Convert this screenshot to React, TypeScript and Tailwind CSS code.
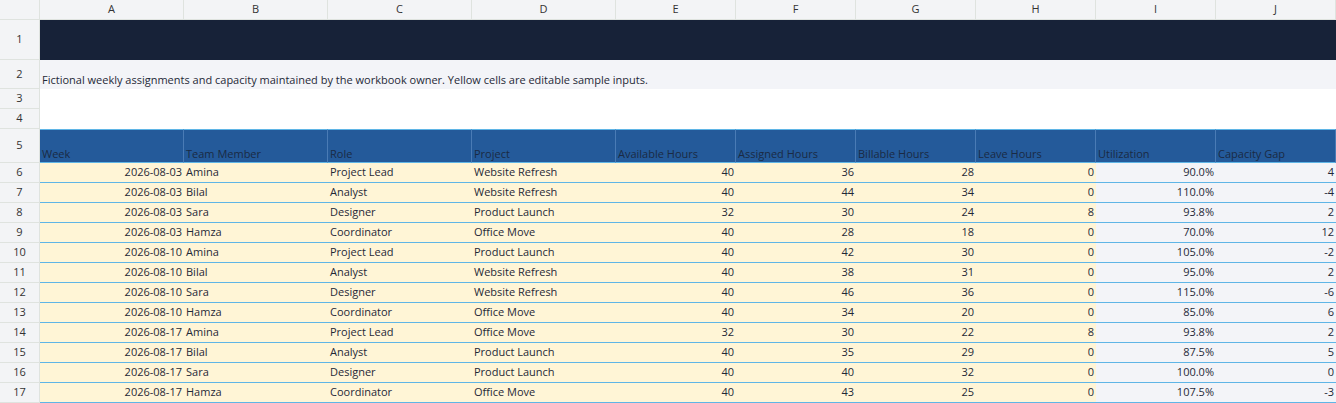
import React from "react";

const cols = ["A", "B", "C", "D", "E", "F", "G", "H", "I", "J"];
const headers = ["Week", "Team Member", "Role", "Project", "Available Hours", "Assigned Hours", "Billable Hours", "Leave Hours", "Utilization", "Capacity Gap"];

const rows: (string | number)[][] = [
  ["2026-08-03", "Amina", "Project Lead", "Website Refresh", 40, 36, 28, 0, "90.0%", 4],
  ["2026-08-03", "Bilal", "Analyst", "Website Refresh", 40, 44, 34, 0, "110.0%", -4],
  ["2026-08-03", "Sara", "Designer", "Product Launch", 32, 30, 24, 8, "93.8%", 2],
  ["2026-08-03", "Hamza", "Coordinator", "Office Move", 40, 28, 18, 0, "70.0%", 12],
  ["2026-08-10", "Amina", "Project Lead", "Product Launch", 40, 42, 30, 0, "105.0%", -2],
  ["2026-08-10", "Bilal", "Analyst", "Website Refresh", 40, 38, 31, 0, "95.0%", 2],
  ["2026-08-10", "Sara", "Designer", "Website Refresh", 40, 46, 36, 0, "115.0%", -6],
  ["2026-08-10", "Hamza", "Coordinator", "Office Move", 40, 34, 20, 0, "85.0%", 6],
  ["2026-08-17", "Amina", "Project Lead", "Office Move", 32, 30, 22, 8, "93.8%", 2],
  ["2026-08-17", "Bilal", "Analyst", "Product Launch", 40, 35, 29, 0, "87.5%", 5],
  ["2026-08-17", "Sara", "Designer", "Product Launch", 40, 40, 32, 0, "100.0%", 0],
  ["2026-08-17", "Hamza", "Coordinator", "Office Move", 40, 43, 25, 0, "107.5%", -3],
];

const grid = "grid grid-cols-[40px_144px_144px_144px_144px_120px_120px_120px_120px_120px_120px]";
const rh = "flex items-center justify-center border-r border-b border-[#dfe3df] bg-[#f3f4f6] text-[#333] text-[11px]";

export default function App() {
  return (
    <div className="w-[1336px] h-[403px] overflow-hidden bg-white text-[11px] text-[#1f2937]" style={{ fontFamily: '"Open Sans", "Noto Sans", sans-serif' }}>
      <div className={`${grid} h-[20px]`}>
        <div className={rh} />
        {cols.map((c) => (
          <div key={c} className={rh}>{c}</div>
        ))}
      </div>
      <div className={`${grid} h-[40px]`}>
        <div className={rh}>1</div>
        <div className="col-span-10 bg-[#172238]" />
      </div>
      <div className={`${grid} h-[29px]`}>
        <div className={rh}>2</div>
        <div className="col-span-10 bg-[#f3f4f8] flex items-end pl-[2px] pb-[1px] text-[#1f2937]">
          Fictional weekly assignments and capacity maintained by the workbook owner. Yellow cells are editable sample inputs.
        </div>
      </div>
      {["3", "4"].map((n) => (
        <div key={n} className={`${grid} h-[20px]`}>
          <div className={`${rh} border-b-dotted`}>{n}</div>
          <div className="col-span-10" />
        </div>
      ))}
      <div className={`${grid} h-[34px]`}>
        <div className={rh}>5</div>
        {headers.map((h) => (
          <div key={h} className="bg-[#245a9a] border-r border-[#4a7bb5] border-t border-t-[#5fb5e6] border-b border-b-[#5fb5e6] flex items-end pl-[2px] text-[#1a2a44] whitespace-nowrap">
            {h}
          </div>
        ))}
      </div>
      {rows.map((r, i) => (
        <div key={i} className={`${grid} h-[20px]`}>
          <div className={rh}>{i + 6}</div>
          {r.map((v, j) => {
            const right = typeof v === "number" || j === 0 || j === 8;
            const bg = j >= 8 ? "bg-[#f3f4f8]" : "bg-[#fff5d6]";
            return (
              <div key={j} className={`${bg} border-b border-[#5fb5e6] flex items-center px-[2px] whitespace-nowrap ${right ? "justify-end" : ""}`}>
                {v}
              </div>
            );
          })}
        </div>
      ))}
    </div>
  );
}
